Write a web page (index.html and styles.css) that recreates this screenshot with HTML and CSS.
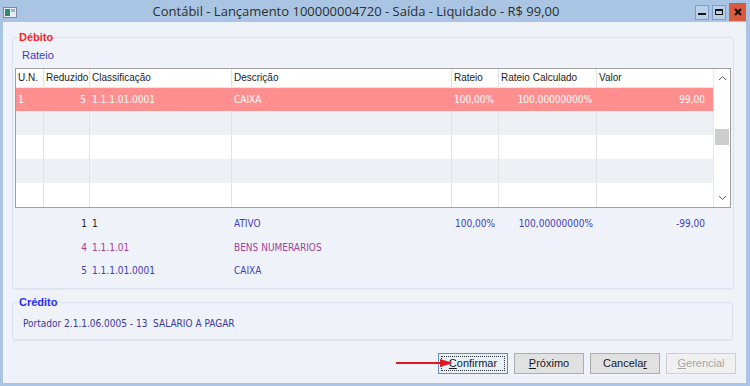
FILE: index.html
```html
<!DOCTYPE html>
<html>
<head>
<meta charset="UTF-8">
<link rel="stylesheet" href="styles.css">
</head>
<body>
<div class="window">
  <div class="titlebar">
    <svg class="app-icon" width="14" height="11" viewBox="0 0 14 11">
      <rect x="0.5" y="0.5" width="13" height="10" fill="#e8eef4" stroke="#7d8a96"/>
      <rect x="2" y="2" width="5" height="7" fill="#2f8a6e"/>
      <rect x="8" y="2" width="4" height="3" fill="#8fb8d8"/>
    </svg>
    <div class="title">Contábil - Lançamento 100000004720 - Saída - Liquidado - R$ 99,00</div>
    <div class="controls">
      <div class="ctl">
        <svg width="12" height="12" viewBox="0 0 12 12"><rect x="2" y="7" width="8" height="2" fill="#111"/></svg>
      </div>
      <div class="ctl">
        <svg width="12" height="12" viewBox="0 0 12 12"><rect x="2.5" y="3.5" width="7" height="5" fill="none" stroke="#111"/><rect x="2" y="3" width="8" height="2" fill="#111"/></svg>
      </div>
      <div class="ctl close">
        <svg width="12" height="12" viewBox="0 0 12 12"><path d="M3 3 L9 9 M9 3 L3 9" stroke="#111" stroke-width="2"/></svg>
      </div>
    </div>
  </div>

  <div class="client">
    <fieldset class="group">
      <legend class="debit">Débito</legend>
      <div class="sub-label">Rateio</div>

      <div class="grid">
        <div class="grid-body">
          <div class="row head">
            <div class="cell">U.N.</div>
            <div class="cell">Reduzido</div>
            <div class="cell">Classificação</div>
            <div class="cell">Descrição</div>
            <div class="cell">Rateio</div>
            <div class="cell">Rateio Calculado</div>
            <div class="cell">Valor</div>
          </div>
          <div class="row selected">
            <div class="cell">1</div>
            <div class="cell num">5</div>
            <div class="cell">1.1.1.01.0001</div>
            <div class="cell">CAIXA</div>
            <div class="cell num">100,00%</div>
            <div class="cell num">100,00000000%</div>
            <div class="cell num value">99,00</div>
          </div>
          <div class="row alt">
            <div class="cell"></div><div class="cell"></div><div class="cell"></div><div class="cell"></div><div class="cell"></div><div class="cell"></div><div class="cell"></div>
          </div>
          <div class="row">
            <div class="cell"></div><div class="cell"></div><div class="cell"></div><div class="cell"></div><div class="cell"></div><div class="cell"></div><div class="cell"></div>
          </div>
          <div class="row alt">
            <div class="cell"></div><div class="cell"></div><div class="cell"></div><div class="cell"></div><div class="cell"></div><div class="cell"></div><div class="cell"></div>
          </div>
          <div class="row">
            <div class="cell"></div><div class="cell"></div><div class="cell"></div><div class="cell"></div><div class="cell"></div><div class="cell"></div><div class="cell"></div>
          </div>
        </div>
        <div class="scrollbar">
          <div class="sb-btn">
            <svg width="9" height="6" viewBox="0 0 9 6"><path d="M1 5 L4.5 1.5 L8 5" fill="none" stroke="#606060"/></svg>
          </div>
          <div class="sb-track"><div class="sb-thumb"></div></div>
          <div class="sb-btn">
            <svg width="9" height="6" viewBox="0 0 9 6"><path d="M1 1 L4.5 4.5 L8 1" fill="none" stroke="#606060"/></svg>
          </div>
        </div>
      </div>

      <div class="summary">
        <div class="row blue">
          <div class="cell"></div>
          <div class="cell num dark">1</div>
          <div class="cell dark">1</div>
          <div class="cell">ATIVO</div>
          <div class="cell num">100,00%</div>
          <div class="cell num">100,00000000%</div>
          <div class="cell num value">-99,00</div>
        </div>
        <div class="row purple">
          <div class="cell"></div>
          <div class="cell num">4</div>
          <div class="cell">1.1.1.01</div>
          <div class="cell">BENS NUMERARIOS</div>
          <div class="cell"></div><div class="cell"></div><div class="cell"></div>
        </div>
        <div class="row blue">
          <div class="cell"></div>
          <div class="cell num">5</div>
          <div class="cell">1.1.1.01.0001</div>
          <div class="cell">CAIXA</div>
          <div class="cell"></div><div class="cell"></div><div class="cell"></div>
        </div>
      </div>
    </fieldset>

    <fieldset class="group credit-group">
      <legend class="credit">Crédito</legend>
      <div class="portador">Portador 2.1.1.06.0005 - 13&nbsp; SALARIO A PAGAR</div>
    </fieldset>

    <div class="buttons">
      <button class="btn focused">
        <svg class="arrow" width="58" height="10" viewBox="0 0 58 10">
          <line x1="0" y1="5" x2="46" y2="5" stroke="#e3161e" stroke-width="2"/>
          <polygon points="44,1 57,5 44,9" fill="#e3161e"/>
        </svg>
        <span class="focus-ring"><u>C</u>onfirmar</span>
      </button>
      <button class="btn"><u>P</u>róximo</button>
      <button class="btn">Cancela<u>r</u></button>
      <button class="btn" disabled><u>G</u>erencial</button>
    </div>
  </div>
</div>
</body>
</html>
```

FILE: styles.css
```css
* {
  box-sizing: border-box;
  margin: 0;
  padding: 0;
}

body {
  width: 750px;
  height: 386px;
  overflow: hidden;
  font-family: "Liberation Sans", Arial, sans-serif;
  background: #a9c5e3;
}

.window {
  width: 750px;
  height: 386px;
  display: flex;
  flex-direction: column;
  background: #a9c5e3;
}

/* title bar */
.titlebar {
  height: 22px;
  display: flex;
  align-items: center;
  flex-shrink: 0;
}

.app-icon {
  margin-left: 3px;
  margin-top: 2px;
  flex-shrink: 0;
}

.title {
  flex: 1;
  text-align: center;
  font-family: "Open Sans", "Noto Sans", sans-serif;
  font-size: 13px;
  color: #2e2e2e;
  white-space: nowrap;
}

.controls {
  display: flex;
  align-items: center;
  gap: 3px;
  margin-right: 4px;
  margin-top: 2px;
}

.ctl {
  width: 14px;
  height: 15px;
  display: flex;
  align-items: center;
  justify-content: center;
  border: 1px solid #7f9dc2;
  background: #b9d0ea;
}

.ctl.close {
  width: 17px;
  height: 18px;
  border: none;
  background: #d85a3f;
}

/* client area */
.client {
  flex: 1;
  margin: 0 4px 3px 3px;
  background: #eff2f8;
  padding-top: 9px;
  display: flex;
  flex-direction: column;
}

.group {
  margin: 0 13px 0 9px;
  border: 1px solid #dce2eb;
  border-radius: 3px;
  padding: 0 2px 5px 2px;
  box-shadow: 0 1px 0 #e4e8ef;
}

.group legend {
  margin-left: 3px;
  padding: 0 1px;
  font-size: 11px;
  line-height: 13px;
  font-weight: bold;
}

.debit {
  color: #ff1f1f;
}

.credit {
  color: #1f2cff;
}

.sub-label {
  margin: 5px 0 6px 7px;
  font-size: 11px;
  line-height: 13px;
  color: #3a3ac8;
}

/* grid */
.grid {
  display: flex;
  border: 1px solid #a0a0a0;
  background: #fff;
}

.grid-body {
  flex: 1;
}

.row {
  display: grid;
  grid-template-columns: 28px 46px 142px 220px 47px 98px 116px;
  height: 24px;
}

.row.head {
  height: 19px;
  background: #fff;
  border-bottom: 1px solid #e6e6e6;
}

.cell {
  font-family: "DejaVu Sans Condensed", "DejaVu Sans", sans-serif;
  font-stretch: condensed;
  font-size: 10px;
  line-height: 24px;
  padding: 0 3px 0 2px;
  border-right: 1px solid #e3e3e3;
  white-space: nowrap;
  overflow: hidden;
}

.cell:last-child {
  border-right: none;
}

.row.head .cell {
  font-family: "Liberation Sans", Arial, sans-serif;
  font-stretch: normal;
  font-size: 10px;
  line-height: 18px;
  color: #222;
}

.row.selected {
  background: #ff8e8e;
  height: 23px;
}

.row.selected .cell {
  color: #fff;
  line-height: 23px;
  border-right-color: transparent;
}

.row.alt {
  background: #eef0f6;
}

.num {
  text-align: right;
}

.value {
  padding-right: 8px;
}

.row .cell.num:nth-child(5),
.row .cell.num:nth-child(6) {
  padding-right: 4px;
}

.scrollbar {
  width: 17px;
  display: flex;
  flex-direction: column;
  background: #f6f6f6;
  border-left: 1px solid #e8e8e8;
}

.sb-btn {
  height: 18px;
  display: flex;
  align-items: center;
  justify-content: center;
  background: #fff;
}

.sb-track {
  flex: 1;
  padding-top: 42px;
  display: flex;
  justify-content: center;
  background: #fff;
}

.sb-thumb {
  width: 14px;
  height: 16px;
  background: #cdcdcd;
}

/* summary below grid */
.summary {
  margin-top: 4px;
  padding-left: 1px;
}

.summary .row {
  height: 23.5px;
}

.summary .cell {
  border-right: none;
  line-height: 23.5px;
}

.summary .blue .cell {
  color: #4141b9;
}

.summary .purple .cell {
  color: #a23f9e;
}

.summary .cell.dark {
  color: #222;
}

/* credit */
.credit-group {
  margin-top: 7px;
  padding-bottom: 9px;
}

.portador {
  margin: 8px 0 0 8px;
  font-family: "DejaVu Sans Condensed", "DejaVu Sans", sans-serif;
  font-stretch: condensed;
  font-size: 10px;
  line-height: 13px;
  color: #3a3a9e;
}

/* buttons */
.buttons {
  margin-top: 13px;
  display: flex;
  justify-content: flex-end;
  gap: 6px;
  padding-right: 10px;
}

.btn {
  position: relative;
  width: 70px;
  height: 21px;
  font-family: "Liberation Sans", Arial, sans-serif;
  font-size: 11px;
  color: #1a1a1a;
  background: #e1e1e1;
  border: 1px solid #adadad;
}

.btn.focused {
  border-color: #5a8fc4;
  background: #e5f1fb;
  padding: 2px;
}

.focus-ring {
  display: block;
  height: 100%;
  line-height: 13px;
  border: 1px dotted #333;
}

.btn:disabled {
  color: #a6a6a6;
  background: #f0f0f0;
  border-color: #cfcfcf;
}

.arrow {
  position: absolute;
  left: -43px;
  top: 4px;
}
```
